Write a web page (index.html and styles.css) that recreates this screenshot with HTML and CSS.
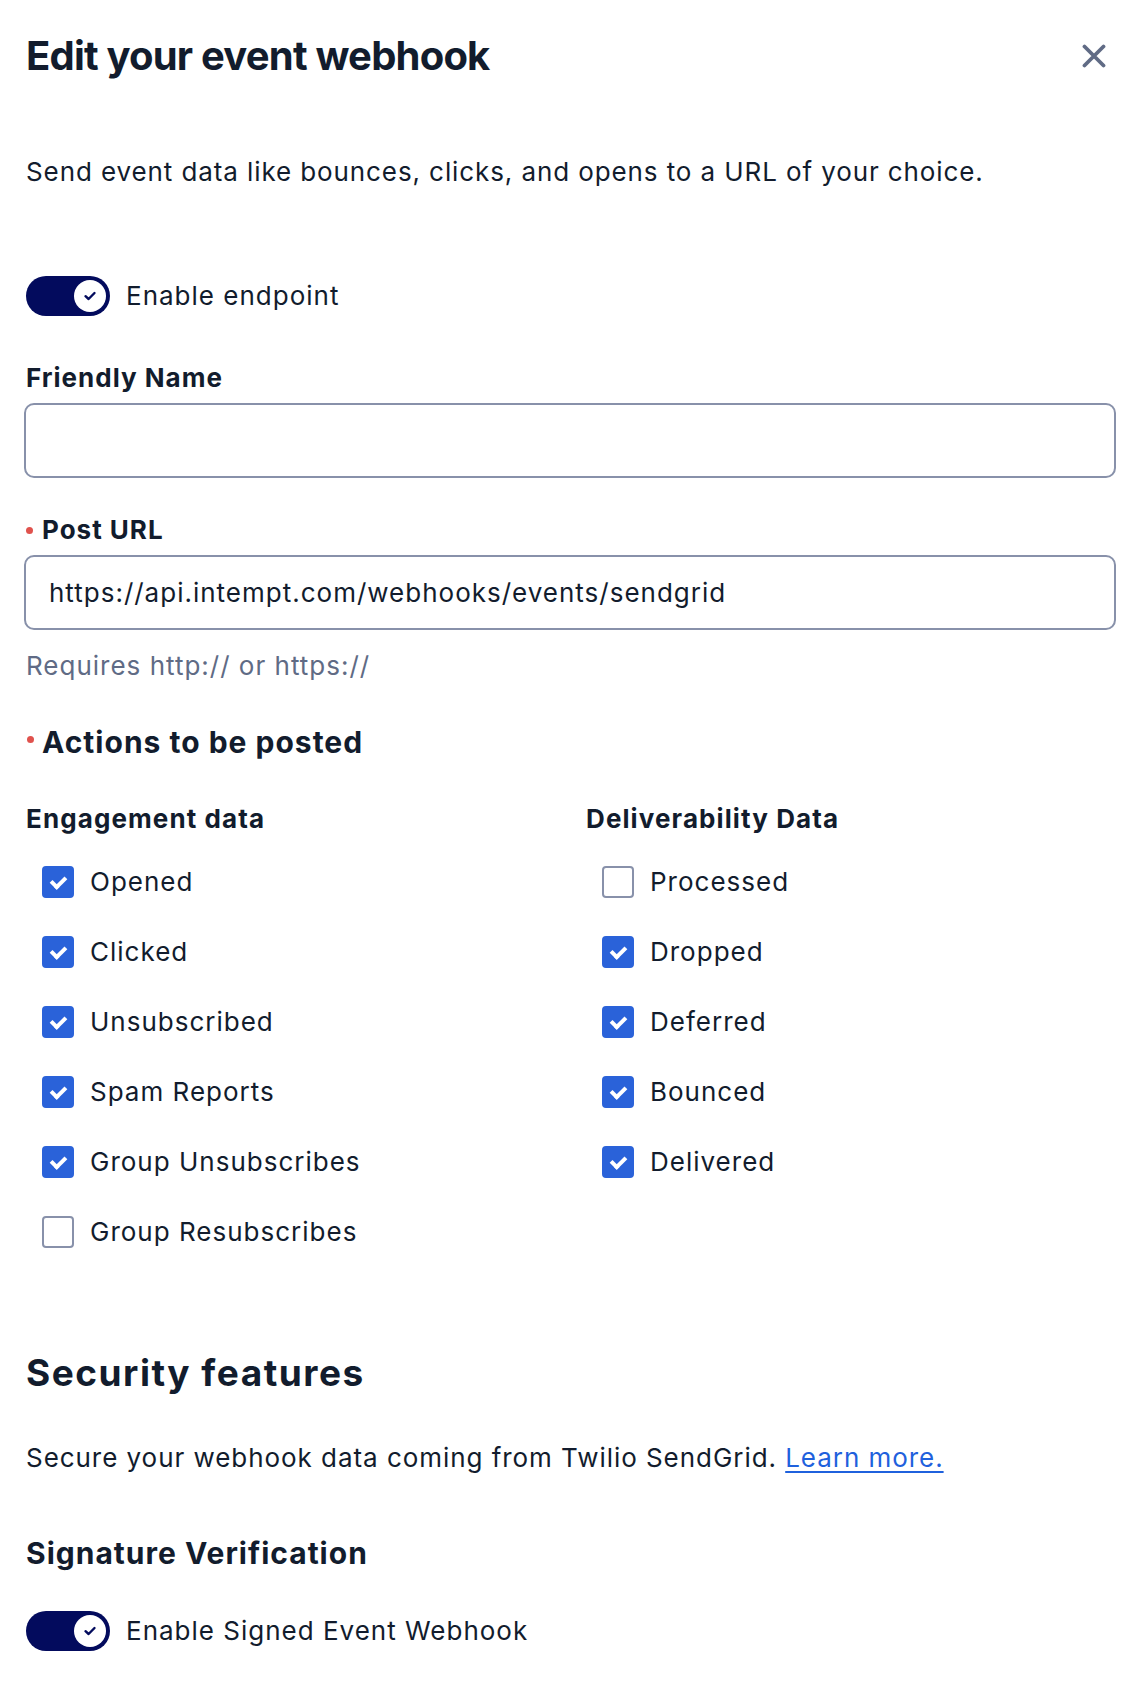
FILE: index.html
```html
<!DOCTYPE html>
<html lang="en">
<head>
<meta charset="utf-8">
<title>Edit your event webhook</title>
<link rel="stylesheet" href="styles.css">
</head>
<body>
<div class="modal">
  <header class="modal-header">
    <h1 class="title">Edit your event webhook</h1>
    <button class="close" aria-label="Close">
      <svg width="24" height="24" viewBox="0 0 24 24"><path d="M2.5 2.5 L21.5 21.5 M21.5 2.5 L2.5 21.5" stroke="#606b85" stroke-width="3.8" stroke-linecap="round" fill="none"/></svg>
    </button>
  </header>

  <p class="subtitle">Send event data like bounces, clicks, and opens to a URL of your choice.</p>

  <div class="toggle-row toggle-row-first">
    <span class="toggle"><span class="knob"><svg width="14" height="12" viewBox="0 0 14 12"><path d="M2.5 6.2 L5.6 9 L11.5 3" stroke="#030b5d" stroke-width="2.4" stroke-linecap="round" stroke-linejoin="round" fill="none"/></svg></span></span>
    <span class="body-text">Enable endpoint</span>
  </div>

  <label class="field-label label-friendly">Friendly Name</label>
  <div class="input"></div>

  <label class="field-label label-post"><span class="req"></span>Post URL</label>
  <div class="input"><span class="body-text">https://api.intempt.com/webhooks/events/sendgrid</span></div>
  <p class="helper">Requires http:// or https://</p>

  <h2 class="section-title"><span class="req req-lg"></span>Actions to be posted</h2>

  <div class="columns">
    <div class="col">
      <h3 class="col-title">Engagement data</h3>
      <ul class="checks">
        <li><span class="cb on"></span><span class="body-text">Opened</span></li>
        <li><span class="cb on"></span><span class="body-text">Clicked</span></li>
        <li><span class="cb on"></span><span class="body-text">Unsubscribed</span></li>
        <li><span class="cb on"></span><span class="body-text">Spam Reports</span></li>
        <li><span class="cb on"></span><span class="body-text">Group Unsubscribes</span></li>
        <li><span class="cb"></span><span class="body-text">Group Resubscribes</span></li>
      </ul>
    </div>
    <div class="col">
      <h3 class="col-title">Deliverability Data</h3>
      <ul class="checks">
        <li><span class="cb"></span><span class="body-text">Processed</span></li>
        <li><span class="cb on"></span><span class="body-text">Dropped</span></li>
        <li><span class="cb on"></span><span class="body-text">Deferred</span></li>
        <li><span class="cb on"></span><span class="body-text">Bounced</span></li>
        <li><span class="cb on"></span><span class="body-text">Delivered</span></li>
      </ul>
    </div>
  </div>

  <h2 class="big-title">Security features</h2>
  <p class="security-text">Secure your webhook data coming from Twilio SendGrid. <a href="#" class="link">Learn more.</a></p>

  <h2 class="section-title sig-title">Signature Verification</h2>

  <div class="toggle-row toggle-row-sig">
    <span class="toggle"><span class="knob"><svg width="14" height="12" viewBox="0 0 14 12"><path d="M2.5 6.2 L5.6 9 L11.5 3" stroke="#030b5d" stroke-width="2.4" stroke-linecap="round" stroke-linejoin="round" fill="none"/></svg></span></span>
    <span class="body-text">Enable Signed Event Webhook</span>
  </div>
</div>
</body>
</html>
```

FILE: styles.css
```css
* { box-sizing: border-box; }

html, body {
  margin: 0;
  padding: 0;
  background: #ffffff;
}

body {
  font-family: Inter, "Noto Sans", "Liberation Sans", sans-serif;
  color: #121c2d;
}

.modal {
  padding: 32px 28px 40px 24px;
}

.modal-header {
  display: flex;
  align-items: center;
  justify-content: space-between;
}

.title {
  margin: 0 0 0 2px;
  font-size: 40px;
  line-height: 48px;
  font-weight: 700;
  letter-spacing: -0.8px;
}

.close {
  border: 0;
  background: none;
  padding: 0;
  margin-right: 10px;
  width: 24px;
  height: 24px;
  display: flex;
}

.body-text {
  font-size: 26px;
  line-height: 36px;
  letter-spacing: 1px;
}

.subtitle {
  margin: 74px 0 0 2px;
  font-size: 26px;
  line-height: 36px;
  letter-spacing: 0.9px;
}

.toggle-row {
  display: flex;
  align-items: center;
  gap: 16px;
  margin-left: 2px;
}

.toggle-row-first { margin-top: 86px; }
.toggle-row-sig { margin-top: 40px; }

.toggle {
  width: 84px;
  height: 40px;
  border-radius: 20px;
  background: #030b5d;
  display: flex;
  align-items: center;
  justify-content: flex-end;
  padding-right: 4px;
  flex-shrink: 0;
}

.knob {
  width: 32px;
  height: 32px;
  border-radius: 50%;
  background: #ffffff;
  display: flex;
  align-items: center;
  justify-content: center;
}

.field-label {
  display: flex;
  align-items: center;
  font-size: 26px;
  line-height: 32px;
  font-weight: 700;
  letter-spacing: 1px;
  margin-left: 2px;
  margin-bottom: 9px;
}

.label-friendly { margin-top: 46px; }
.label-post { margin-top: 36px; }

.req {
  width: 7px;
  height: 7px;
  border-radius: 50%;
  background: #e0524d;
  margin-right: 9px;
  flex-shrink: 0;
}

.req-lg {
  align-self: flex-start;
  margin-top: 12px;
  margin-right: 8px;
}

.input {
  height: 75px;
  border: 2px solid #8891aa;
  border-radius: 10px;
  display: flex;
  align-items: center;
  padding: 0 23px;
  padding-top: 1px;
}

.helper {
  margin: 18px 0 0 2px;
  font-size: 26px;
  line-height: 36px;
  letter-spacing: 1px;
  color: #606b85;
}

.section-title {
  display: flex;
  margin: 40px 0 0 3px;
  font-size: 30px;
  line-height: 36px;
  font-weight: 700;
  letter-spacing: 1px;
}

.columns {
  display: grid;
  grid-template-columns: 1fr 1fr;
  column-gap: 30px;
  margin-top: 43px;
  margin-left: 2px;
}

.col-title {
  margin: 0;
  font-size: 26px;
  line-height: 32px;
  font-weight: 700;
  letter-spacing: 1.1px;
}

.checks {
  list-style: none;
  margin: 29px 0 0 16px;
  padding: 0;
  display: flex;
  flex-direction: column;
  gap: 34px;
}

.checks li {
  display: flex;
  align-items: center;
  gap: 16px;
  height: 36px;
}

.cb {
  width: 32px;
  height: 32px;
  border-radius: 4px;
  border: 2px solid #8891aa;
  background: #ffffff;
  flex-shrink: 0;
  position: relative;
}

.cb.on {
  border-color: #2a62d9;
  background: #2a62d9;
}

.cb.on::after {
  content: "";
  position: absolute;
  top: 8px;
  left: 7px;
  width: 11px;
  height: 6px;
  border-left: 4px solid #ffffff;
  border-bottom: 4px solid #ffffff;
  transform: rotate(-45deg);
  transform-origin: center;
}

.big-title {
  margin: 101px 0 0 2px;
  font-size: 37px;
  line-height: 44px;
  font-weight: 700;
  letter-spacing: 1.5px;
}

.security-text {
  margin: 45px 0 0 2px;
  font-size: 26px;
  line-height: 36px;
  letter-spacing: 0.95px;
}

.link {
  color: #1f61dd;
  text-decoration: underline;
  text-underline-offset: 4px;
  text-decoration-thickness: 2px;
}

.sig-title {
  margin-top: 59px;
  margin-left: 2px;
}
```
